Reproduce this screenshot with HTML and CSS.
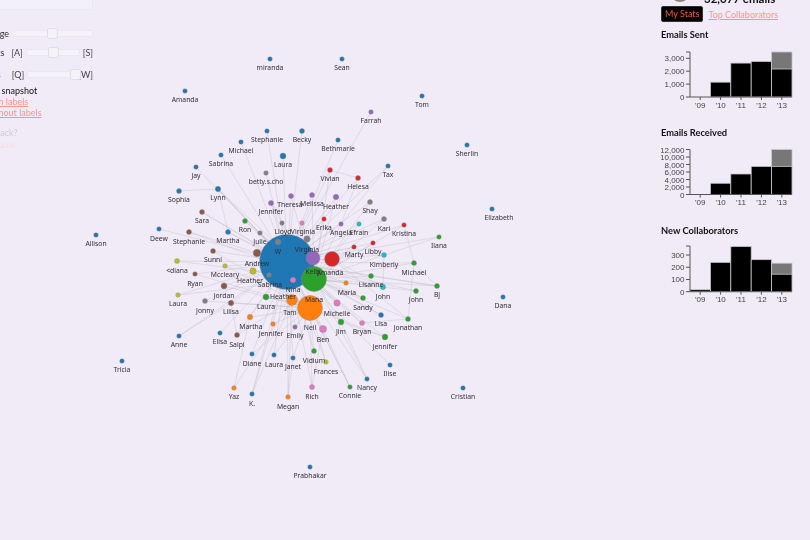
FILE: index.html
```html
<!DOCTYPE html>
<html lang="en">
<head>
  <meta charset="UTF-8">
  <meta name="viewport" content="width=device-width, initial-scale=1.0">
  <title>Email Network</title>
  <link rel="stylesheet" href="styles.css">
</head>
<body>
  <div class="page">
    <aside class="controls">
      <div class="search-box"></div>
      <div class="slider-row first">
        <span>Date range</span>
        <div class="track wide"><div class="thumb thumb-a"></div></div>
      </div>
      <div class="slider-row second">
        <span>Contacts</span>
        <span class="key">[A]</span>
        <div class="track"><div class="thumb thumb-b"></div></div>
        <span class="key">[S]</span>
      </div>
      <div class="slider-row third">
        <span>Labels</span>
        <span class="key">[Q]</span>
        <div class="track"><div class="thumb thumb-c"></div></div>
        <span class="key">[W]</span>
      </div>
      <div class="snapshot">
        <p class="snapshot-title">Get a snapshot</p>
        <p><a href="#">with labels</a></p>
        <p><a href="#">without labels</a></p>
      </div>
      <div class="feedback">
        <p>Feedback?</p>
        <p class="faint">2030</p>
      </div>
    </aside>

    <main class="graph">
      <svg id="network" viewBox="93 0 557 540"></svg>
    </main>

    <aside class="stats">
      <div class="profile">
        <div class="avatar"></div>
        <div class="total">32,077 emails</div>
      </div>
      <div class="tabs">
        <a href="#" class="tab active">My Stats</a>
        <a href="#" class="tab">Top Collaborators</a>
      </div>
      <section class="chart-block">
        <h2>Emails Sent</h2>
        <svg id="sent" class="chart"></svg>
      </section>
      <section class="chart-block">
        <h2>Emails Received</h2>
        <svg id="received" class="chart"></svg>
      </section>
      <section class="chart-block">
        <h2>New Collaborators</h2>
        <svg id="collaborators" class="chart"></svg>
      </section>
    </aside>
  </div>
  <script src="graph.js"></script>
</body>
</html>
```

FILE: styles.css
```css
body {
  font-family: Lato, "Open Sans", sans-serif;
  background-color: #f1ebf8;
  color: #111;
  margin: 0;
  overflow: hidden;
}
.page {
  display: flex;
  width: 810px;
  height: 540px;
  overflow: hidden;
  filter: blur(0.45px);
}
p {
  margin: 0;
}
a {
  color: #fd9488;
}

.controls {
  flex: none;
  width: 200px;
  margin-left: -107px;
  font-size: 9px;
  color: #333;
}
.search-box {
  height: 10px;
  background-color: #f4f0f9;
  border: 1px solid #ebe6f3;
  border-top: none;
  border-radius: 0 0 2px 2px;
  box-sizing: border-box;
}
.slider-row {
  display: flex;
  align-items: center;
  justify-content: flex-end;
  gap: 3px;
  height: 12px;
  white-space: nowrap;
}
.slider-row.first {
  margin-top: 17px;
}
.slider-row.second {
  margin-top: 7px;
}
.slider-row.second span:first-child {
  margin-right: 4px;
}
.slider-row.third {
  margin-top: 10px;
}
.slider-row.third span:first-child {
  margin-right: 8px;
}
.slider-row.third .track {
  width: 52px;
  margin-right: -4px;
}
.key {
  color: #444;
}
.track {
  position: relative;
  z-index: 1;
  width: 54px;
  height: 7px;
  background-color: #f5f2f9;
  border: 1px solid #ebe7f1;
  border-radius: 2px;
  box-sizing: border-box;
}
.track.wide {
  width: 81px;
}
.thumb {
  position: absolute;
  top: -3px;
  width: 11px;
  height: 11px;
  background-color: #f5f2f8;
  border: 1px solid #e2dde8;
  border-radius: 2px;
  box-sizing: border-box;
}
.thumb-a {
  left: 34px;
}
.thumb-b {
  left: 21px;
}
.thumb-c {
  left: 42px;
}
.snapshot {
  margin-top: 5px;
  padding-left: 93px;
  line-height: 11px;
  white-space: nowrap;
  color: #111;
}
.snapshot-title {
  margin-left: -8px;
}
.feedback {
  margin-top: 9px;
  padding-left: 83px;
  line-height: 12px;
  color: #cfcad6;
  white-space: nowrap;
}
.feedback .faint {
  margin-left: 24px;
  color: #f6dcd9;
  font-size: 7px;
}

.graph {
  flex: 1;
}
#network {
  display: block;
  width: 557px;
  height: 540px;
  overflow: visible;
}
.edge {
  stroke: #b9b6bd;
  stroke-width: 0.8;
  opacity: 0.42;
}
.node {
  stroke: #8d8a90;
  stroke-width: 0.4;
}
.node-label {
  font-family: "Noto Sans", sans-serif;
  font-size: 6.8px;
  fill: #2e2e38;
  text-anchor: middle;
}

.stats {
  flex: none;
  width: 149px;
  margin-left: 11px;
}
.profile {
  display: flex;
  align-items: flex-end;
  gap: 14px;
  margin-top: -38px;
  padding-left: 9px;
  height: 40px;
}
.avatar {
  width: 20px;
  height: 20px;
  border-radius: 50%;
  background-color: #8a8780;
}
.total {
  font-size: 11.5px;
  font-weight: bold;
  line-height: 14px;
  margin-bottom: -4px;
}
.tabs {
  display: flex;
  align-items: center;
  gap: 5px;
  margin-top: 4px;
  font-size: 9px;
}
.tab {
  white-space: nowrap;
}
.tab.active {
  background-color: #000;
  color: #ef5a3c;
  padding: 2px 3px;
  border: 1px solid #333;
  border-radius: 2px;
  line-height: 10px;
  text-decoration: none;
}
.chart-block {
  height: 98px;
}
.tabs + .chart-block {
  margin-top: 7px;
}
.chart-block h2 {
  margin: 0 0 4px;
  font-size: 9.3px;
  line-height: 12px;
  font-weight: bold;
}
.chart {
  display: block;
  width: 149px;
  height: 66px;
}
.bar {
  stroke: #c9c6cd;
  stroke-width: 0.8;
}
.bar.total-bar {
  fill: #777;
}
.bar.mine {
  fill: #000;
}
.axis {
  stroke: #555;
  stroke-width: 1;
  fill: none;
}
.axis-text {
  font-family: "Liberation Sans", Arial, sans-serif;
  font-size: 8px;
  fill: #444;
}
```

FILE: graph.js
```js
const SVG_NS = 'http://www.w3.org/2000/svg';

const colors = {
  b: '#1f77b4', o: '#ff7f0e', g: '#2ca02c', r: '#d62728', p: '#9467bd',
  n: '#8c564b', k: '#e377c2', y: '#7f7f7f', l: '#bcbd22', c: '#17becf'
};

// hubs the other nodes link to
const hubs = {
  W: [287, 262], K: [314, 279], M: [310, 308], O: [292, 300], R: [332, 259], P: [313, 258]
};

// label, x, y, radius, colour, links, label x, label y
const nodes = [
  ['', 287, 262, 27.5, 'b', ''],
  ['', 314, 279, 12.5, 'g', 'W'],
  ['', 310, 308, 12.5, 'o', 'W'],
  ['', 332, 259, 7.5, 'r', 'W'],
  ['', 313, 258, 7, 'p', 'W'],
  ['', 292, 300, 5.5, 'o', 'WM'],
  ['miranda', 270, 59, 2.3, 'b', ''],
  ['Sean', 342, 59, 2.3, 'b', ''],
  ['Amanda', 185, 91, 2.3, 'b', ''],
  ['Tom', 422, 96, 2.3, 'b', ''],
  ['Farrah', 371, 112, 2.3, 'p', 'W'],
  ['Stephanie', 267, 131, 2.3, 'b', 'W'],
  ['Becky', 302, 131, 2.5, 'b', 'W'],
  ['Michael', 241, 142, 2.3, 'b', 'W'],
  ['Laura', 283, 156, 3, 'b', 'W'],
  ['Bethmarie', 338, 140, 2.3, 'b', 'W'],
  ['Sherlin', 467, 145, 2.3, 'b', ''],
  ['Sabrina', 221, 155, 2.3, 'b', 'W'],
  ['Jay', 196, 167, 2.3, 'b', 'W'],
  ['betty.s.cho', 266, 173, 2.3, 'y', 'W'],
  ['Vivian', 330, 170, 2.5, 'r', 'WK'],
  ['Helesa', 358, 178, 2.5, 'r', 'W'],
  ['Tax', 388, 166, 2.3, 'b', 'W'],
  ['Lynn', 218, 189, 2.7, 'b', 'WWK'],
  ['Sophia', 179, 191, 2.5, 'b', ''],
  ['Jennifer', 271, 203, 2.6, 'p', 'WK'],
  ['Theresa', 291, 196, 2.5, 'p', 'WK', 290, 204],
  ['Melissa', 312, 195, 2.5, 'p', 'WK', 312, 203],
  ['Heather', 336, 197, 2.8, 'p', 'WK', 336, 206],
  ['Shay', 370, 202, 2.5, 'y', 'WK'],
  ['Elizabeth', 492, 209, 2.3, 'b', '', 499, 217],
  ['Sara', 202, 212, 2.5, 'n', 'WK'],
  ['Ron', 245, 221, 2.5, 'g', 'WK'],
  ['Lloyd', 282, 223, 2.3, 'y', 'WK', 283, 231],
  ['Virginia', 302, 223, 2.3, 'k', 'WK', 303, 231],
  ['Erika', 324, 219, 2.3, 'r', 'WK', 324, 227],
  ['Angela', 341, 224, 2.3, 'p', 'WK', 341, 232],
  ['Efrain', 359, 224, 2.3, 'c', 'WK', 359, 232],
  ['Kari', 384, 219, 2.5, 'y', 'WK', 384, 228],
  ['Kristina', 404, 225, 2.3, 'r', 'WK', 404, 233],
  ['Ilana', 439, 237, 2.3, 'g', 'W', 439, 245],
  ['Martha', 228, 232, 2.5, 'b', 'WK'],
  ['Stephanie', 189, 232, 2.5, 'n', 'WK', 189, 241],
  ['Deew', 159, 229, 2.3, 'b', 'W', 159, 238],
  ['Julie', 260, 233, 2.3, 'y', 'WK'],
  ['Allison', 96, 235, 2.3, 'b', ''],
  ['Sunni', 213, 251, 2.5, 'n', 'WM'],
  ['Andrew', 257, 253, 3.8, 'n', 'K', 257, 263],
  ['<diana', 177, 261, 2.5, 'l', 'WK', 177, 270],
  ['Mccleary', 225, 266, 2.3, 'l', 'WM'],
  ['Heather', 253, 271, 3.2, 'l', 'KM', 250, 280],
  ['Sabrina', 269, 275, 2.3, 'y', 'K', 270, 284],
  ['Ryan', 195, 274, 2.3, 'n', 'WM', 195, 283],
  ['Jordan', 224, 286, 3, 'n', 'WM', 224, 295],
  ['Laura', 178, 295, 2.3, 'l', 'WK', 178, 303],
  ['Jonny', 205, 301, 2.5, 'y', 'WM', 205, 310],
  ['Lilisa', 231, 303, 2.7, 'n', 'WM', 231, 311],
  ['Laura', 266, 297, 3, 'g', 'WM', 266, 306],
  ['Martha', 250, 317, 2.7, 'o', 'WM', 251, 326],
  ['Jennifer', 273, 324, 2.3, 'o', 'WM', 271, 333],
  ['Anne', 179, 336, 2.3, 'b', 'W', 179, 344],
  ['Elisa', 220, 333, 2.3, 'b', 'W', 220, 341],
  ['Salpi', 237, 335, 2.5, 'n', 'WO', 237, 344],
  ['Diane', 252, 354, 2.3, 'b', 'WM', 252, 363],
  ['Laura', 274, 355, 2.3, 'b', 'WM', 274, 364],
  ['Yaz', 234, 388, 2.3, 'o', 'O', 234, 396],
  ['K.', 252, 394, 2.3, 'b', 'WO', 252, 403],
  ['Tricia', 122, 361, 2.3, 'b', ''],
  ['Marty', 354, 247, 2.3, 'r', 'WK', 354, 254],
  ['Libby', 373, 243, 2.3, 'r', 'WK', 373, 251],
  ['Kimberly', 384, 255, 2.5, 'c', 'WK', 384, 264],
  ['Michael', 414, 263, 2.5, 'g', 'WK', 414, 272],
  ['Lisanne', 371, 276, 2.5, 'g', 'WK', 371, 284],
  ['John', 383, 287, 2.7, 'c', 'WKR', 383, 296],
  ['John', 416, 291, 2.5, 'g', 'WK', 416, 299],
  ['Bj', 437, 286, 2.5, 'g', 'WK', 437, 294],
  ['Maria', 346, 283, 2.3, 'o', 'WK', 347, 292],
  ['Sandy', 363, 298, 2.5, 'g', 'WK', 363, 307],
  ['Lisa', 381, 315, 2.5, 'b', 'WK', 381, 323],
  ['Jonathan', 408, 319, 2.5, 'g', 'KR', 408, 327],
  ['Bryan', 362, 323, 2.5, 'k', 'WK', 362, 331],
  ['Jim', 341, 322, 2.9, 'g', 'WK', 341, 331],
  ['Jennifer', 385, 337, 2.9, 'g', 'WM', 385, 346],
  ['Ilise', 390, 365, 2.3, 'b', 'W', 390, 373],
  ['Nancy', 367, 379, 2.3, 'b', 'WK', 367, 387],
  ['Connie', 350, 387, 2.3, 'g', 'WM', 350, 395],
  ['Cristian', 463, 388, 2.3, 'b', ''],
  ['Dana', 503, 297, 2.3, 'b', ''],
  ['Prabhakar', 310, 467, 2.3, 'b', ''],
  ['Michelle', 337, 303, 3.2, 'k', 'WK', 337, 313],
  ['Neil', 323, 329, 3.6, 'k', 'WM', 310, 327],
  ['Ben', 323, 329, 0, 'k', '', 323, 339],
  ['Emily', 295, 327, 2.3, 'p', 'WM', 295, 335],
  ['Vidium', 314, 351, 2.5, 'g', 'WM', 314, 360],
  ['Frances', 326, 362, 2.3, 'l', 'WM', 326, 371],
  ['Janet', 293, 358, 2.3, 'b', 'WM', 293, 366],
  ['Rich', 312, 387, 2.5, 'k', 'WM', 312, 396],
  ['Megan', 288, 397, 2.3, 'o', 'WO', 288, 406],
  ['W', 278, 242, 2.7, 'y', 'K', 278, 251],
  ['Virginia', 307, 239, 3.2, 'y', 'WK', 307, 249],
  ['Nina', 293, 280, 2.8, 'k', 'KM', 293, 289]
];

// labels sitting on their own
const extraLabels = [
  ['Kelly', 313, 271], ['Amanda', 330, 272], ['Heather', 283, 296],
  ['Mana', 314, 299], ['Tam', 290, 312]
];

// links that do not go to a hub
const extraLinks = [
  [218, 189, 179, 191], [330, 170, 358, 178], [388, 166, 341, 224],
  [439, 237, 384, 255], [404, 225, 414, 263], [414, 263, 437, 286],
  [414, 263, 408, 319], [234, 388, 250, 317], [252, 394, 273, 324],
  [179, 336, 231, 303], [218, 189, 228, 232], [358, 178, 341, 224],
  [384, 255, 383, 287], [408, 319, 362, 323], [385, 337, 341, 322],
  [437, 286, 371, 276], [312, 387, 323, 329], [350, 387, 323, 329],
  [288, 397, 293, 358], [367, 379, 341, 322], [237, 335, 231, 303]
];

function el(parent, name, attrs, text) {
  const item = document.createElementNS(SVG_NS, name);
  Object.keys(attrs).forEach(key => item.setAttribute(key, attrs[key]));
  if (text) item.textContent = text;
  parent.appendChild(item);
  return item;
}

function drawNetwork() {
  const svg = document.getElementById('network');
  const line = (x1, y1, x2, y2) => el(svg, 'line', { class: 'edge', x1, y1, x2, y2 });

  extraLinks.forEach(link => line(link[0], link[1], link[2], link[3]));
  nodes.forEach(n => {
    n[5].split('').forEach(hub => line(n[1], n[2], hubs[hub][0], hubs[hub][1]));
  });

  nodes.forEach(n => {
    if (n[3] > 0) el(svg, 'circle', { class: 'node', cx: n[1], cy: n[2], r: n[3], fill: colors[n[4]] });
  });

  nodes.forEach(n => {
    if (!n[0]) return;
    const x = n[6] === undefined ? n[1] : n[6];
    const y = n[7] === undefined ? n[2] + 10.5 : n[7] + 2.5;
    el(svg, 'text', { class: 'node-label', x, y }, n[0]);
  });
  extraLabels.forEach(l => el(svg, 'text', { class: 'node-label', x: l[1], y: l[2] + 2.5 }, l[0]));
}

const years = ["'09", "'10", "'11", "'12", "'13"];
const barLeft = 29;
const barWidth = 20.4;

// top, base: axis ends in the chart; scale: pixels per unit
function drawChart(id, top, base, scale, ticks, mine, total) {
  const svg = document.getElementById(id);

  mine.forEach((value, i) => {
    const x = barLeft + i * barWidth;
    if (total[i] > value) {
      el(svg, 'rect', { class: 'bar total-bar', x, y: base - total[i] * scale, width: barWidth, height: total[i] * scale });
    }
    el(svg, 'rect', { class: 'bar mine', x, y: base - value * scale, width: barWidth, height: value * scale });
    const mid = x + barWidth / 2;
    el(svg, 'line', { class: 'axis', x1: mid, y1: base, x2: mid, y2: base + 3 });
    el(svg, 'text', { class: 'axis-text', x: mid, y: base + 10.5, 'text-anchor': 'middle' }, years[i]);
  });

  el(svg, 'path', { class: 'axis', d: `M${barLeft - 4} ${top}H${barLeft}V${base}H${barLeft + 5 * barWidth}` });
  ticks.forEach(tick => {
    const y = base - tick * scale;
    el(svg, 'line', { class: 'axis', x1: barLeft - 4, y1: y, x2: barLeft, y2: y });
    el(svg, 'text', { class: 'axis-text', x: barLeft - 5.5, y: y + 3, 'text-anchor': 'end' }, tick.toLocaleString('en-US'));
  });
}

drawNetwork();
drawChart('sent', 7, 52, 0.0129, [0, 1000, 2000, 3000],
  [0, 1150, 2630, 2760, 2170], [0, 0, 0, 0, 3490]);
drawChart('received', 6.5, 51.5, 0.00375, [0, 2000, 4000, 6000, 8000, 10000, 12000],
  [0, 3000, 5470, 7500, 7500], [0, 0, 0, 0, 12000]);
drawChart('collaborators', 5, 50.7, 0.1223, [0, 100, 200, 300],
  [16, 240, 370, 262, 143], [0, 0, 0, 0, 233]);
```
